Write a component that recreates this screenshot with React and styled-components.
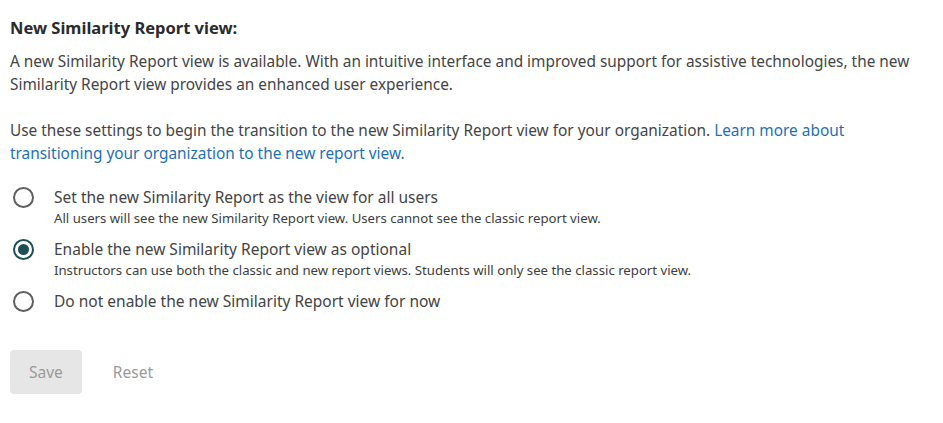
import React, { useState } from "react";
import styled, { createGlobalStyle } from "styled-components";

const Global = createGlobalStyle`
  html, body { margin: 0; padding: 0; background: #fff; }
  body { font-family: "Noto Sans", "Open Sans", sans-serif; color: #3d3d3d; }
`;

const Page = styled.div`
  padding: 16px 10px 0 10px;
  width: 913px;
`;

const Title = styled.h2`
  margin: 0 0 10px 0;
  font-size: 16.5px;
  font-weight: 700;
  line-height: 24px;
  color: #2b2b2b;
`;

const Para = styled.p`
  margin: 0 0 23px 0;
  font-size: 15.4px;
  line-height: 23px;
  color: #444;
`;

const Link = styled.a`
  color: #1f6fb5;
  text-decoration: none;
`;

const Options = styled.div`
  display: flex;
  flex-direction: column;
  gap: 10px;
  margin-top: -2px;
`;

const Option = styled.label`
  display: grid;
  grid-template-columns: 44px 1fr;
  align-items: start;
  cursor: pointer;
`;

const RadioCircle = styled.span`
  box-sizing: border-box;
  width: 21px;
  height: 21px;
  margin: 1px 0 0 3px;
  border-radius: 50%;
  border: 2px solid ${p => (p.$checked ? "#1d4f55" : "#5f5f5f")};
  display: flex;
  align-items: center;
  justify-content: center;
  &::after {
    content: "";
    width: 11px;
    height: 11px;
    border-radius: 50%;
    background: #1d4f55;
    display: ${p => (p.$checked ? "block" : "none")};
  }
`;

const Texts = styled.div`
  display: flex;
  flex-direction: column;
`;

const OptionLabel = styled.span`
  font-size: 15.5px;
  line-height: 22px;
  color: #444;
`;

const OptionHint = styled.span`
  font-size: 13.2px;
  line-height: 20px;
  color: #3d3d3d;
`;

const Actions = styled.div`
  display: flex;
  align-items: center;
  gap: 12px;
  margin-top: 38px;
`;

const Button = styled.button`
  font-family: inherit;
  font-size: 15.5px;
  height: 44px;
  padding: 0 19px;
  border: none;
  border-radius: 4px;
  background: ${p => (p.$filled ? "#e6e6e6" : "transparent")};
  color: #9a9a9a;
  cursor: default;
`;

const options = [
  {
    label: "Set the new Similarity Report as the view for all users",
    hint: "All users will see the new Similarity Report view. Users cannot see the classic report view.",
  },
  {
    label: "Enable the new Similarity Report view as optional",
    hint: "Instructors can use both the classic and new report views. Students will only see the classic report view.",
  },
  { label: "Do not enable the new Similarity Report view for now" },
];

export default function App() {
  const [sel, setSel] = useState(1);
  return (
    <Page>
      <Global />
      <Title>New Similarity Report view:</Title>
      <Para>
        A new Similarity Report view is available. With an intuitive interface and improved support for assistive
        technologies, the new Similarity Report view provides an enhanced user experience.
      </Para>
      <Para>
        Use these settings to begin the transition to the new Similarity Report view for your organization.{" "}
        <Link href="#">Learn more about transitioning your organization to the new report view.</Link>
      </Para>
      <Options>
        {options.map((o, i) => (
          <Option key={i} onClick={() => setSel(i)}>
            <RadioCircle $checked={sel === i} />
            <Texts>
              <OptionLabel>{o.label}</OptionLabel>
              {o.hint && <OptionHint>{o.hint}</OptionHint>}
            </Texts>
          </Option>
        ))}
      </Options>
      <Actions>
        <Button $filled disabled>Save</Button>
        <Button disabled>Reset</Button>
      </Actions>
    </Page>
  );
}
